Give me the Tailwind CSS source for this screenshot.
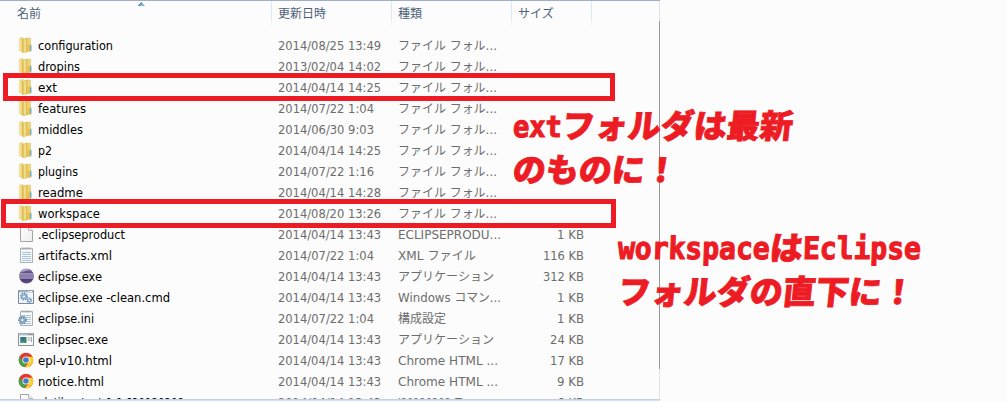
<!DOCTYPE html>
<html lang="ja">
<head>
<meta charset="utf-8">
<title>eclipse</title>
<script src="https://cdn.jsdelivr.net/npm/@tailwindcss/browser@4"></script>
</head>
<body class="relative h-[402px] w-[1007px] overflow-hidden bg-[#fcfcfc] font-['DejaVu_Sans','Noto_Sans_CJK_JP',sans-serif] text-[12px]">
<svg class="absolute h-0 w-0">
  <defs>
    <linearGradient id="fy" x2="1"><stop stop-color="#fbf0b4"/><stop offset="1" stop-color="#e4c657"/></linearGradient>
    <linearGradient id="fz" x2="1"><stop stop-color="#dbb950"/><stop offset=".5" stop-color="#f6e494"/><stop offset="1" stop-color="#e0bf55"/></linearGradient>
    <linearGradient id="ec" x2="0" y2="1"><stop stop-color="#8a7bb0"/><stop offset=".5" stop-color="#3c2a68"/><stop offset="1" stop-color="#62508d"/></linearGradient>
    <linearGradient id="pg" x2="1" y2="1"><stop stop-color="#fff"/><stop offset="1" stop-color="#eeeeee"/></linearGradient>
  </defs>
  <symbol id="folder" viewBox="0 0 16 16">
    <path d="M1.3 1.2L5 .5v14.3l-3.7-1z" fill="url(#fy)" stroke="#e3cd79" stroke-width=".6"/>
    <path d="M8 1.2h4.5v13H8z" fill="#eed574" stroke="#dcc169" stroke-width=".6"/>
    <path d="M4.7 2.3L9 1.2v13.6l-4.3 1z" fill="url(#fz)" stroke="#d5b54f" stroke-width=".6"/>
    <path d="M9.5 8l3.8-1v7.5H9z" fill="#e2c158"/>
    <path d="M12.7 8.5v5" stroke="#55aee8" stroke-width="1.3"/>
  </symbol>
  <symbol id="page" viewBox="0 0 16 16">
    <path d="M2.5 .5h8.2l3.8 3.8v11.2h-12z" fill="url(#pg)" stroke="#a3a3a3"/><path d="M10.5 .5v4h4" fill="#f4f4f4" stroke="#b5b5b5"/>
  </symbol>
  <symbol id="note" viewBox="0 0 16 16">
    <path d="M2.5 1.5h12v14h-12z" fill="#f7f8f9" stroke="#aab0b4"/><path d="M3 2.5l1-2 1 2 1-2 1 2 1-2 1 2 1-2 1 2 1-2 1 2" fill="none" stroke="#a4a9ac" stroke-width=".8"/>
    <path d="M4 5.5h9M4 7.5h9M4 9.5h9M4 11.5h9M4 13.5h9" stroke="#a9c6d9"/>
  </symbol>
  <symbol id="eclipse" viewBox="0 0 16 16">
    <circle cx="8.5" cy="8" r="7.4" fill="url(#ec)"/><path d="M1.6 6h13.8M1.2 8h14.6M1.6 10h13.8" stroke="#d8d2e8" stroke-width="1"/>
    <path d="M3.6 3.2a7 7 0 0 1 8.6-1.1C8 2 5 3.5 3.4 5z" fill="#b9aed0"/>
  </symbol>
  <symbol id="cmd" viewBox="0 0 16 16">
    <path d="M.5 1.5h15v13H.5z" fill="#f2f6fa" stroke="#7c8998"/><path d="M1 2.5h14" stroke="#a9b6c5" stroke-width="2"/><path d="M10 2.5h4" stroke="#fff" stroke-dasharray="1 .5"/>
    <circle cx="6" cy="7.5" r="2.9" fill="#dbe9f6" stroke="#5c8ab8" stroke-width="2" stroke-dasharray="1.4 .8"/><circle cx="6" cy="7.5" r="1.6" fill="#fff" stroke="#5c8ab8" stroke-width=".8"/>
    <circle cx="11.3" cy="11.2" r="1.8" fill="#fff" stroke="#4a7fb5" stroke-width="1.7" stroke-dasharray="1.2 .5"/>
  </symbol>
  <symbol id="ini" viewBox="0 0 16 16">
    <use href="#note"/><circle cx="4.4" cy="10" r="3.3" fill="#d8e5ef" stroke="#6088a8" stroke-width="2" stroke-dasharray="1.5 .8"/><circle cx="4.4" cy="10" r="1.8" fill="#f5f9fc" stroke="#6088a8"/>
  </symbol>
  <symbol id="app" viewBox="0 0 16 16">
    <path d="M.5 2.5h15v12H.5z" fill="#fbfbfb" stroke="#89929b"/><path d="M1 3.5h14" stroke="#bdc5cc" stroke-width="2"/><path d="M10 3.5h4.5" stroke="#6f7882" stroke-dasharray="1 .7"/>
    <path d="M2.5 6h6v6h-6z" fill="#39806d"/><path d="M2.5 6h3.2v6H2.5z" fill="#346fa0"/><path d="M2.5 9l5.5 3H2.5z" fill="#56a46c"/><path d="M9.5 7h3M9.5 9h3M13.5 6v5" stroke="#a0a6ab"/>
  </symbol>
  <symbol id="chrome" viewBox="0 0 16 16">
    <circle cx="8" cy="8" r="7.3" fill="#e23a2e"/>
    <path d="M1.7 4.3L5 10l3 2-1.3 3.2A7.3 7.3 0 0 1 1.7 4.3z" fill="#41a648"/>
    <path d="M8 4.7h6.5A7.3 7.3 0 0 1 7 15.2L10.9 10z" fill="#fbd02c"/>
    <circle cx="8" cy="8" r="3.6" fill="#fff"/><circle cx="8" cy="8" r="2.8" fill="#3d7fca"/>
  </symbol>
</svg>

<main class="relative h-[402px] w-[660px] overflow-hidden border-t border-[#a0afc9]">
  <svg class="absolute left-[138px] top-px h-[4px] w-[7px]" viewBox="0 0 7 4"><path d="M0 4L3.5 0 7 4z" fill="#7fb4d2"/><path d="M0 4L3.5 0v1L1 4z" fill="#3c5e72"/></svg>
  <header class="grid h-[34px] grid-cols-[271px_120px_120px_80px_1fr] text-[12px] leading-[27px] text-[#4c607a]">
    <div class="pl-[17px]">名前</div>
    <div class="relative pl-[7px]"><i class="absolute left-0 top-0 h-[26px] w-px bg-linear-to-b from-[#dce6f4] from-60% to-[#fcfcfc]"></i>更新日時</div>
    <div class="relative pl-[7px]"><i class="absolute left-0 top-0 h-[26px] w-px bg-linear-to-b from-[#dce6f4] from-60% to-[#fcfcfc]"></i>種類</div>
    <div class="relative pl-[7px]"><i class="absolute left-0 top-0 h-[26px] w-px bg-linear-to-b from-[#dce6f4] from-60% to-[#fcfcfc]"></i>サイズ</div>
    <div class="relative"><i class="absolute left-0 top-0 h-[26px] w-px bg-linear-to-b from-[#dce6f4] from-60% to-[#fcfcfc]"></i></div>
  </header>
  <div id="rows" class="h-[364px] overflow-hidden"></div>
  <div class="h-[2px] border-t border-[#c3d0e2] bg-[#d6e2f3]"></div>
  <div class="absolute right-0 top-0 flex h-[398px] w-px flex-col"><i class="h-5 bg-[#e3e3e3]"></i><i class="h-[348px] bg-[#999999]"></i><i class="flex-1 bg-[#e3e3e3]"></i></div>
</main>

<div class="absolute left-[3px] top-[73px] h-[28px] w-[612px] border-5 border-[#ed1c24]"></div>
<div class="absolute left-px top-[199px] h-[29px] w-[615px] border-5 border-[#ed1c24]"></div>

<section class="absolute left-[513px] top-[102px] font-['DejaVu_Sans_Mono','Noto_Sans_CJK_JP',monospace] text-[33px] font-black text-[#ed1c24]">
  <p class="flex h-[50px] items-center whitespace-nowrap leading-[50px]"><span class="inline-block origin-center -skew-x-2 scale-y-110 text-[27px] [-webkit-text-stroke:1.1px_#ed1c24]">ext</span><span class="inline-block -skew-x-6 [-webkit-text-stroke:0.8px_#ed1c24]">フォルダは最新</span></p>
  <p class="-mt-[6px] h-[50px] whitespace-nowrap leading-[50px]"><span class="inline-block -skew-x-6 [-webkit-text-stroke:0.8px_#ed1c24]">のものに！</span></p>
</section>
<section class="absolute left-[618px] top-[224px] font-['DejaVu_Sans_Mono','Noto_Sans_CJK_JP',monospace] text-[33px] font-black text-[#ed1c24]">
  <p class="flex h-[50px] items-center whitespace-nowrap leading-[50px]"><span class="inline-block -skew-x-2 scale-y-110 text-[28px] [-webkit-text-stroke:1.1px_#ed1c24]">workspace</span><span class="inline-block -skew-x-6 [-webkit-text-stroke:0.8px_#ed1c24]">は</span><span class="inline-block -skew-x-2 scale-y-110 text-[28px] [-webkit-text-stroke:1.1px_#ed1c24]">Eclipse</span></p>
  <p class="-mt-[6px] h-[50px] whitespace-nowrap leading-[50px]"><span class="inline-block -skew-x-6 [-webkit-text-stroke:0.8px_#ed1c24]">フォルダの直下に！</span></p>
</section>

<script>
const F = 'ファイル フォル...';
// icon, name, name width, modified, type, type width, size
const files = [
  ['folder','configuration',75,'2014/08/25 13:49',F,99,''],
  ['folder','dropins',42,'2013/02/04 14:02',F,99,''],
  ['folder','ext',19,'2014/04/14 14:25',F,99,''],
  ['folder','features',48,'2014/07/22 1:04',F,99,''],
  ['folder','middles',45,'2014/06/30 9:03',F,99,''],
  ['folder','p2',14,'2014/04/14 14:25',F,99,''],
  ['folder','plugins',40,'2014/07/22 1:16',F,99,''],
  ['folder','readme',45,'2014/04/14 14:28',F,99,''],
  ['folder','workspace',62,'2014/08/20 13:26',F,99,''],
  ['page','.eclipseproduct',87,'2014/04/14 13:43','ECLIPSEPRODU...',103,'1 KB'],
  ['note','artifacts.xml',74,'2014/07/22 1:04','XML ファイル',78,'116 KB'],
  ['eclipse','eclipse.exe',64,'2014/04/14 13:43','アプリケーション',96,'312 KB'],
  ['cmd','eclipse.exe -clean.cmd',132,'2014/04/14 13:43','Windows コマン...',103,'1 KB'],
  ['ini','eclipse.ini',56,'2014/07/22 1:04','構成設定',48,'1 KB'],
  ['app','eclipsec.exe',70,'2014/04/14 13:43','アプリケーション',96,'24 KB'],
  ['chrome','epl-v10.html',74,'2014/04/14 13:43','Chrome HTML ...',100,'17 KB'],
  ['chrome','notice.html',66,'2014/04/14 13:43','Chrome HTML ...',100,'9 KB'],
  ['page','plutil_output-1.0.620120208',146,'2014/04/14 13:43','I20120208 フ...',75,'6 KB'],
];
// label condensed to a given width
const label = (t, w) => t ? `<svg class="block h-[21px] overflow-visible" width="${w}"><text y="15" textLength="${w}" lengthAdjust="spacingAndGlyphs" fill="currentColor">${t}</text></svg>` : '';
const sizeWidth = { 4: 27, 5: 34, 6: 41 };
document.getElementById('rows').innerHTML = files.map(([ic, n, nw, d, t, tw, s]) => `
<div class="grid h-[21px] grid-cols-[18px_20px_240px_120px_120px_66px] whitespace-nowrap text-[#6d6d6d]">
  <span></span><svg class="mt-[2px] h-4 w-4"><use href="#${ic}"/></svg>
  <div class="text-black">${label(n, nw)}</div>
  <div>${label(d, d.length > 15 ? 103 : 96)}</div>
  <div>${label(t, tw)}</div>
  <div class="flex justify-end">${label(s, sizeWidth[s.length])}</div>
</div>`).join('');
</script>
</body>
</html>
